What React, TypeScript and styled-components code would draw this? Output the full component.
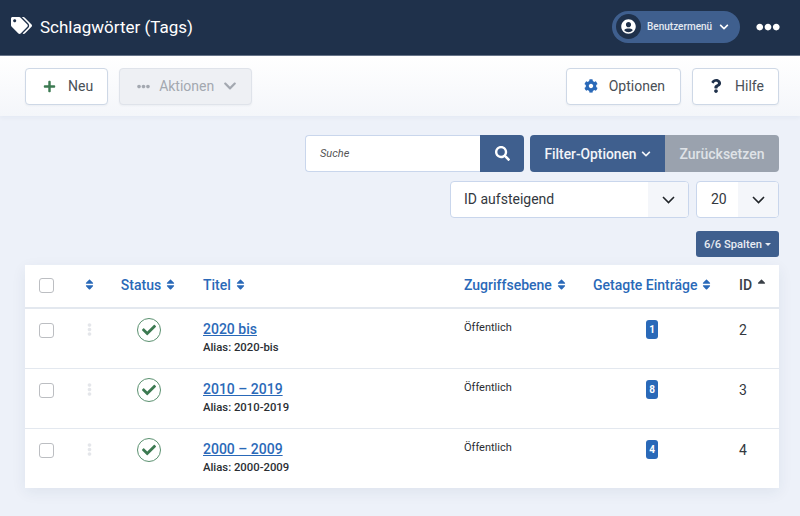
import React from 'react';
import styled, { createGlobalStyle } from 'styled-components';
import { FaTags, FaSearch, FaCog, FaQuestion, FaUserCircle, FaEllipsisH, FaPlus, FaChevronDown, FaSort, FaSortUp, FaCheck, FaEllipsisV } from 'react-icons/fa';

const GlobalStyle = createGlobalStyle`
  html, body { margin: 0; padding: 0; height: 100%; overflow: hidden; }
  body { background: #edf1f9; font-family: Roboto, "Liberation Sans", sans-serif; color: #22262a; }
  * { box-sizing: border-box; }
`;

const rows = [
  { id: 2, title: '2020 bis', alias: '2020-bis', count: 1 },
  { id: 3, title: '2010 – 2019', alias: '2010-2019', count: 8 },
  { id: 4, title: '2000 – 2009', alias: '2000-2009', count: 4 },
];

const Page = styled.div`
  width: 800px;
  height: 516px;
  overflow: hidden;
`;

const Header = styled.header`
  height: 56px;
  background: #1f314b;
  border-bottom: 1px solid #68758a;
  display: flex;
  align-items: center;
  padding: 0 20px 2px 11px;
  color: #fff;
`;

const Brand = styled.h1`
  display: flex;
  align-items: center;
  gap: 8px;
  margin: 0;
  font-size: 17px;
  font-weight: 400;
  flex: 1;
  svg { font-size: 21px; margin-top: -3px; }
`;

const UserPill = styled.div`
  width: 128px;
  height: 32px;
  border-radius: 16px;
  background: #3f5f8e;
  display: flex;
  align-items: center;
  padding-left: 4px;
  font-size: 10px;
  font-weight: 500;
  color: #e4e9f1;
  margin-right: 16px;
`;

const Avatar = styled.span`
  width: 25px;
  height: 25px;
  border-radius: 50%;
  background: #1f314b;
  display: flex;
  align-items: center;
  justify-content: center;
  font-size: 15px;
  color: #fff;
  margin-right: 6px;
`;

const PillCaret = styled.span`
  display: flex;
  margin-left: 7px;
  font-size: 10px;
  color: #fff;
`;

const More = styled.span`
  display: flex;
  font-size: 24px;
  color: #fff;
`;

const Toolbar = styled.div`
  height: 60px;
  background: linear-gradient(to bottom, #ffffff, #f4f6fa);
  display: flex;
  align-items: center;
  padding: 0 21px 0 25px;
  gap: 11px;
  box-shadow: 0 2px 4px rgba(30, 50, 90, 0.04);
`;

const ToolButton = styled.button<{ $disabled?: boolean; $left?: number; $right?: number }>`
  height: 37px;
  border-radius: 4px;
  border: 1px solid ${(p) => (p.$disabled ? '#dfe3ea' : '#ced8e6')};
  background: ${(p) => (p.$disabled ? '#eef0f4' : '#fff')};
  color: ${(p) => (p.$disabled ? '#a3a8b0' : '#495057')};
  font: 400 14px Roboto, sans-serif;
  display: flex;
  align-items: center;
  padding: 0 ${(p) => p.$right ?? 14}px 0 ${(p) => p.$left ?? 17}px;
  box-shadow: 0 1px 2px rgba(30, 50, 90, 0.05);
`;

const ToolIcon = styled.span<{ $color: string; $size: number; $gap: number; $before?: number }>`
  display: flex;
  color: ${(p) => p.$color};
  font-size: ${(p) => p.$size}px;
  margin-right: ${(p) => p.$gap}px;
  margin-left: ${(p) => p.$before ?? 0}px;
`;

const Spacer = styled.div`
  flex: 1;
`;

const Filters = styled.section`
  display: flex;
  flex-direction: column;
  align-items: flex-end;
  padding: 19px 21px 0 0;
`;

const FilterRow = styled.div`
  display: flex;
  margin-bottom: 9px;
`;

const SearchField = styled.div`
  width: 175px;
  height: 37px;
  background: #fff;
  border: 1px solid #c9d6ec;
  border-right: 0;
  border-radius: 4px 0 0 4px;
  font-size: 11px;
  font-style: italic;
  color: #555;
  padding-left: 14px;
  display: flex;
  align-items: center;
`;

const SearchButton = styled.button`
  width: 44px;
  height: 37px;
  border: 0;
  border-radius: 0 4px 4px 0;
  background: #3f5f8e;
  color: #fff;
  font-size: 15px;
  display: flex;
  align-items: center;
  justify-content: center;
  margin-right: 6px;
`;

const FilterButton = styled.button`
  width: 135px;
  height: 37px;
  border: 0;
  border-radius: 4px 0 0 4px;
  background: #3f5f8e;
  color: #f2f4f8;
  font: 500 13.8px Roboto, sans-serif;
  display: flex;
  align-items: center;
  justify-content: center;
  gap: 4px;
  svg { font-size: 10px; }
`;

const ResetButton = styled.button`
  width: 114px;
  height: 37px;
  border: 0;
  border-radius: 0 4px 4px 0;
  background: #9aa2ae;
  color: #dfe2e7;
  font: 500 14px Roboto, sans-serif;
`;

const Select = styled.div<{ $width: number; $pad: number }>`
  width: ${(p) => p.$width}px;
  height: 37px;
  background: #fff;
  border: 1px solid #c9d6ec;
  border-radius: 4px;
  display: flex;
  align-items: center;
  font-size: 14px;
  color: #33383e;
  overflow: hidden;
  padding-left: ${(p) => p.$pad}px;
  margin-left: 7px;
`;

const SelectLabel = styled.span`
  flex: 1;
  margin-top: -2px;
`;

const SelectArrow = styled.span`
  width: 40px;
  height: 100%;
  background: #f4f6fa;
  display: flex;
  align-items: center;
  justify-content: center;
`;

const ColumnsButton = styled.button`
  width: 83px;
  height: 26px;
  margin-top: 4px;
  border: 0;
  border-radius: 3px;
  background: #3f5f8e;
  color: #e8ecf3;
  font: 500 11.2px Roboto, sans-serif;
  display: flex;
  align-items: center;
  justify-content: center;
  gap: 3px;
`;

const Caret = styled.span`
  border-top: 3px solid #e8ecf3;
  border-left: 3px solid transparent;
  border-right: 3px solid transparent;
`;

const TableWrap = styled.div`
  margin: 8px 21px 0 25px;
  box-shadow: 0 4px 14px rgba(30, 50, 90, 0.07);
`;

const Table = styled.table`
  width: 754px;
  border-collapse: collapse;
  table-layout: fixed;
  background: #fff;
`;

const Th = styled.th<{ $width: number; $pad?: number; $center?: boolean; $dark?: boolean; $iconOnly?: boolean }>`
  width: ${(p) => p.$width}px;
  height: 43px;
  padding: 0 0 2px ${(p) => p.$pad ?? 0}px;
  text-align: ${(p) => (p.$center ? 'center' : 'left')};
  font-size: 14px;
  font-weight: 500;
  color: ${(p) => (p.$dark ? '#3a4047' : '#2a69b8')};
  border-bottom: 2px solid #e3e8ef;
  white-space: nowrap;
  svg { font-size: 13px; vertical-align: -1px; margin-left: ${(p) => (p.$iconOnly ? 0 : 3)}px; }
`;

const Tr = styled.tr`
  height: 60px;
  border-bottom: 1px solid #e3e8ef;
  &:last-child { border-bottom: 0; }
`;

const Td = styled.td<{ $pad?: number; $center?: boolean; $top?: number }>`
  vertical-align: top;
  padding: ${(p) => p.$top ?? 13}px 0 0 ${(p) => p.$pad ?? 0}px;
  text-align: ${(p) => (p.$center ? 'center' : 'left')};
`;

const Checkbox = styled.span`
  display: block;
  width: 15px;
  height: 15px;
  margin-left: 14px;
  border: 1px solid #bcbec2;
  border-radius: 3px;
  background: #fff;
`;

const Handle = styled.span`
  color: #e4e6ea;
  font-size: 13px;
  svg { display: block; margin: 0 auto; }
`;

const StatusIcon = styled.span`
  width: 24px;
  height: 24px;
  border: 1px solid #5b9170;
  border-radius: 50%;
  color: #3c7a52;
  font-size: 14px;
  display: inline-flex;
  align-items: center;
  justify-content: center;
`;

const TitleLink = styled.a`
  display: block;
  font-size: 14px;
  font-weight: 500;
  color: #2a69b8;
  text-decoration: underline;
  line-height: 17px;
  margin-top: -1px;
`;

const Alias = styled.div`
  font-size: 11.3px;
  font-weight: 500;
  color: #2a2e33;
  margin-top: 3px;
`;

const Access = styled.span`
  display: block;
  font-size: 11px;
  color: #2a2e33;
`;

const Count = styled.span`
  display: block;
  width: 12px;
  height: 19px;
  line-height: 19px;
  text-align: center;
  background: #2a69b8;
  border-radius: 3px;
  color: #fff;
  font-size: 10px;
  font-weight: 700;
`;

const IdText = styled.span`
  display: block;
  font-size: 14px;
  color: #33383e;
`;

const App = () => (
  <Page>
    <GlobalStyle />
    <Header>
      <Brand><FaTags />Schlagwörter (Tags)</Brand>
      <UserPill>
        <Avatar><FaUserCircle /></Avatar>
        Benutzermenü
        <PillCaret><FaChevronDown /></PillCaret>
      </UserPill>
      <More><FaEllipsisH /></More>
    </Header>
    <Toolbar>
      <ToolButton>
        <ToolIcon $color="#3c7a52" $size={13} $gap={12}><FaPlus /></ToolIcon>Neu
      </ToolButton>
      <ToolButton $disabled>
        <ToolIcon $color="#a3a8b0" $size={13} $gap={9}><FaEllipsisH /></ToolIcon>Aktionen
        <ToolIcon $color="#a3a8b0" $size={14} $gap={0} $before={9}><FaChevronDown /></ToolIcon>
      </ToolButton>
      <Spacer />
      <ToolButton $right={15}>
        <ToolIcon $color="#2a69b8" $size={14} $gap={11}><FaCog /></ToolIcon>Optionen
      </ToolButton>
      <ToolButton $left={16} $right={14}>
        <ToolIcon $color="#1f314b" $size={14} $gap={12}><FaQuestion /></ToolIcon>Hilfe
      </ToolButton>
    </Toolbar>
    <Filters>
      <FilterRow>
        <SearchField>Suche</SearchField>
        <SearchButton><FaSearch /></SearchButton>
        <FilterButton>Filter-Optionen <FaChevronDown /></FilterButton>
        <ResetButton>Zurücksetzen</ResetButton>
      </FilterRow>
      <FilterRow>
        <Select $width={239} $pad={13}>
          <SelectLabel>ID aufsteigend</SelectLabel>
          <SelectArrow>
            <svg width="13" height="8" viewBox="0 0 13 8" fill="none" stroke="#22262a" strokeWidth="1.6"><path d="M1 1l5.5 5.5L12 1" /></svg>
          </SelectArrow>
        </Select>
        <Select $width={83} $pad={14}>
          <SelectLabel>20</SelectLabel>
          <SelectArrow>
            <svg width="13" height="8" viewBox="0 0 13 8" fill="none" stroke="#22262a" strokeWidth="1.6"><path d="M1 1l5.5 5.5L12 1" /></svg>
          </SelectArrow>
        </Select>
      </FilterRow>
      <ColumnsButton>6/6 Spalten <Caret /></ColumnsButton>
    </Filters>
    <TableWrap>
      <Table>
        <thead>
          <tr>
            <Th $width={45}><Checkbox /></Th>
            <Th $width={39} $center $iconOnly><FaSort /></Th>
            <Th $width={79} $center $pad={1}>Status<FaSort /></Th>
            <Th $width={276} $pad={15}>Titel<FaSort /></Th>
            <Th $width={129}>Zugriffsebene<FaSort /></Th>
            <Th $width={146}>Getagte Einträge<FaSort /></Th>
            <Th $width={40} $dark>ID<FaSortUp /></Th>
          </tr>
        </thead>
        <tbody>
          {rows.map((row) => (
            <Tr key={row.id}>
              <Td $top={14}><Checkbox /></Td>
              <Td $center $top={14}><Handle><FaEllipsisV /></Handle></Td>
              <Td $center $top={9}><StatusIcon><FaCheck /></StatusIcon></Td>
              <Td $pad={15}>
                <TitleLink>{row.title}</TitleLink>
                <Alias>Alias: {row.alias}</Alias>
              </Td>
              <Td $top={12}><Access>Öffentlich</Access></Td>
              <Td $top={11} $pad={53}><Count>{row.count}</Count></Td>
              <Td $top={13}><IdText>{row.id}</IdText></Td>
            </Tr>
          ))}
        </tbody>
      </Table>
    </TableWrap>
  </Page>
);

export default App;
